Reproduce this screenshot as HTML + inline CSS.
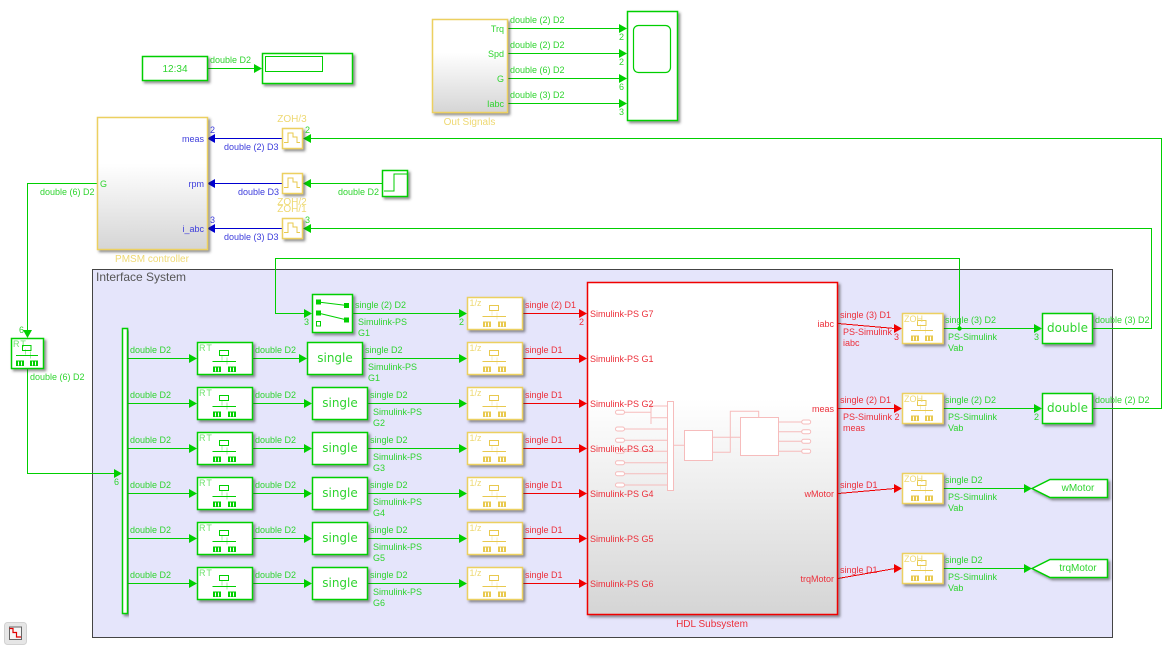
<!DOCTYPE html>
<html><head><meta charset="utf-8"><title>Simulink model</title>
<style>
html,body{margin:0;padding:0;background:#fff;width:1171px;height:648px;overflow:hidden}
svg{display:block}
text{font-family:"Liberation Sans",sans-serif;font-size:9px}
.g text,text.g{fill:#2fd42f}
.r text,text.r{fill:#ec2f3a}
.b text,text.b{fill:#3c3cdc}
.y text,text.y{fill:#eed973;font-size:10px}
.m{text-anchor:middle}.e{text-anchor:end}
.big{font-family:"DejaVu Sans",sans-serif;font-size:12px;text-anchor:middle;fill:#2fd42f}
.rt{font-size:9px;letter-spacing:1px;fill-opacity:.7}
.l{fill:none;stroke-width:1}
.gl{stroke:#00cf00}.rl{stroke:#f00000}.bl{stroke:#0000d0}
.bg{fill:#fff;stroke:#00cf00;stroke-width:1.500;filter:url(#s)}
.by{fill:#fff;stroke:#ecd060;stroke-width:1.500;filter:url(#s)}
.gh{fill:none;stroke:#f6bcbc;stroke-width:1}
.ghf{fill:#fff;stroke:#f6bcbc;stroke-width:1}
</style></head><body>
<svg xmlns="http://www.w3.org/2000/svg" width="1171" height="648" viewBox="0 0 1171 648">
<defs>
<filter id="s" x="-20%" y="-20%" width="150%" height="150%"><feDropShadow dx="2" dy="2" stdDeviation="1.3" flood-color="#333" flood-opacity=".55"/></filter>
<linearGradient id="gr" x1="0" y1="0" x2="0" y2="1"><stop offset=".35" stop-color="#fff"/><stop offset="1" stop-color="#d5d5d5"/></linearGradient>
<polygon id="a" points="0,-4.500 8,0 0,4.500"/>
<polygon id="al" points="8,-4.500 0,0 8,4.500"/>
<g id="ic">
<rect x="11" y="7" width="8.500" height="5" fill="none" stroke="currentColor"/>
<path d="M4.500 17H26.500" stroke="currentColor" fill="none"/>
<path d="M14 11V16M19 13V20" stroke="currentColor" stroke-opacity=".35" fill="none"/>
<rect x="4.500" y="22" width="8" height="5.500" fill="currentColor"/>
<rect x="18.500" y="22" width="8" height="5.500" fill="currentColor"/>
<path d="M7 23V27M10 23V27M21 23V27M24 23V27" stroke="#fff" fill="none"/>
</g>
<g id="ic2">
<rect x="22" y="8" width="9" height="5" fill="none" stroke="currentColor"/>
<path d="M15 19H38.500" stroke="currentColor" fill="none"/>
<path d="M24.500 13V18M29.500 15V22" stroke="currentColor" stroke-opacity=".35" fill="none"/>
<rect x="15.500" y="24" width="8" height="5.500" fill="currentColor"/>
<rect x="30.500" y="24" width="8" height="5.500" fill="currentColor"/>
<path d="M18 25V29M21 25V29M33 25V29M36 25V29" stroke="#fff" fill="none"/>
</g>
<path id="st" d="M1.500 14H5.500V4.500H10.500V8.500H14.500V14H17.500" fill="none" stroke="#e8c94e"/>
</defs>

<!-- Interface System -->
<rect x="92.500" y="269.500" width="1020" height="368" fill="#e5e5fb" stroke="#444" stroke-width="1"/>
<text x="96" y="281" style="font-size:12px" fill="#555">Interface System</text>

<!-- Green wires -->
<g class="l gl">
<path d="M208 68.500H255"/>
<path d="M508 28.500H620M508 53.500H620M508 78.500H620M508 103.500H620"/>
<path d="M311 138.500H1161.500V408.500H1093"/>
<path d="M311 183.500H382"/>
<path d="M311 228.500H1151.500V328.500H1093"/>
<path d="M97 183.500H27.500V331"/>
<path d="M27.500 369V473.500H115"/>
<path d="M128 358.500H190M128 403.500H190M128 448.500H190M128 493.500H190M128 538.500H190M128 583.500H190"/>
<path d="M253 358.500H300M253 403.500H305M253 448.500H305M253 493.500H305M253 538.500H305M253 583.500H305"/>
<path d="M353 313.500H460M363 358.500H460M368 403.500H460M368 448.500H460M368 493.500H460M368 538.500H460M368 583.500H460"/>
<path d="M305 313.500H275.500V258.500H959.500V328.500"/>
<path d="M943 328.500H1035M943 408.500H1035M943 488.500H1025M943 568.500H1025"/>
</g>
<circle cx="959.500" cy="328.500" r="2.200" fill="#00cf00"/>

<!-- Blue wires -->
<g class="l bl"><path d="M214 138.500H283M214 183.500H283M214 228.500H283"/></g>
<g fill="#0000d0">
<use href="#al" x="207" y="138.500"/><use href="#al" x="207" y="183.500"/><use href="#al" x="207" y="228.500"/>
</g>

<!-- Red wires -->
<g class="l rl">
<path d="M523 313.500H580M523 358.500H580M523 403.500H580M523 448.500H580M523 493.500H580M523 538.500H580M523 583.500H580"/>
<path d="M838 408.500H895"/>
<path d="M838 323.500L895 328.500" shape-rendering="crispEdges"/>
<path d="M838 493.500L895 488.500" shape-rendering="crispEdges"/>
<path d="M838 578.500L895 568.500" shape-rendering="crispEdges"/>
</g>
<g fill="#f00000">
<use href="#a" x="579" y="313.500"/><use href="#a" x="579" y="358.500"/><use href="#a" x="579" y="403.500"/><use href="#a" x="579" y="448.500"/><use href="#a" x="579" y="493.500"/><use href="#a" x="579" y="538.500"/><use href="#a" x="579" y="583.500"/>
<use href="#a" x="894" y="328.500"/><use href="#a" x="894" y="408.500"/><use href="#a" x="894" y="488.500"/><use href="#a" x="894" y="568.500"/>
</g>

<!-- Green arrows -->
<g fill="#00cf00">
<use href="#a" x="254" y="68.500"/>
<use href="#a" x="619" y="28.500"/><use href="#a" x="619" y="53.500"/><use href="#a" x="619" y="78.500"/><use href="#a" x="619" y="103.500"/>
<use href="#al" x="303" y="138.500"/><use href="#al" x="303" y="183.500"/><use href="#al" x="303" y="228.500"/>
<polygon points="23,330 32,330 27.500,338"/>
<use href="#a" x="114" y="473.500"/>
<use href="#a" x="189" y="358.500"/><use href="#a" x="189" y="403.500"/><use href="#a" x="189" y="448.500"/><use href="#a" x="189" y="493.500"/><use href="#a" x="189" y="538.500"/><use href="#a" x="189" y="583.500"/>
<use href="#a" x="299" y="358.500"/><use href="#a" x="304" y="403.500"/><use href="#a" x="304" y="448.500"/><use href="#a" x="304" y="493.500"/><use href="#a" x="304" y="538.500"/><use href="#a" x="304" y="583.500"/>
<use href="#a" x="304" y="313.500"/>
<use href="#a" x="459" y="313.500"/><use href="#a" x="459" y="358.500"/><use href="#a" x="459" y="403.500"/><use href="#a" x="459" y="448.500"/><use href="#a" x="459" y="493.500"/><use href="#a" x="459" y="538.500"/><use href="#a" x="459" y="583.500"/>
<use href="#a" x="1034" y="328.500"/><use href="#a" x="1034" y="408.500"/><use href="#a" x="1024" y="488.500"/><use href="#a" x="1024" y="568.500"/>
</g>

<!-- Top: clock + display -->
<rect class="bg" x="142.500" y="56.500" width="65" height="24"/>
<text x="175" y="72" class="m g" style="font-size:10px">12:34</text>
<rect class="bg" x="262.500" y="53.500" width="90" height="30"/>
<rect x="265.500" y="56.500" width="57" height="15" fill="#fff" stroke="#00cf00"/>

<!-- Out Signals + scope -->
<rect x="432.500" y="19.500" width="75" height="93" fill="url(#gr)" stroke="#ecd060" stroke-width="1.500" filter="url(#s)"/>
<g class="g">
<text x="504" y="32" class="e">Trq</text><text x="504" y="57" class="e">Spd</text><text x="504" y="82" class="e">G</text><text x="504" y="107" class="e">Iabc</text>
<text x="510" y="23">double (2) D2</text><text x="510" y="48">double (2) D2</text><text x="510" y="73">double (6) D2</text><text x="510" y="98">double (3) D2</text>
<text x="619" y="40">2</text><text x="619" y="65">2</text><text x="619" y="90">6</text><text x="619" y="115">3</text>
<text x="210" y="63">double D2</text>
</g>
<text x="469.500" y="125" class="y m">Out Signals</text>
<rect class="bg" x="627.500" y="11.500" width="50" height="109"/>
<rect x="633.500" y="25.500" width="37" height="47" rx="5" fill="#fff" stroke="#00cf00" stroke-width="1.200"/>

<!-- PMSM controller -->
<rect x="97.500" y="117.500" width="110" height="132" fill="url(#gr)" stroke="#ecd060" stroke-width="1.500" filter="url(#s)"/>
<g class="b">
<text x="204" y="142" class="e">meas</text><text x="204" y="187" class="e">rpm</text><text x="204" y="232" class="e">i_abc</text>
<text x="210" y="133">2</text><text x="210" y="223">3</text>
<text x="224" y="150">double (2) D3</text><text x="238" y="195">double D3</text><text x="224" y="240">double (3) D3</text>
</g>
<text x="100" y="187" class="g">G</text>
<text x="152" y="262" class="y m">PMSM controller</text>

<!-- ZOH small -->
<rect class="by" x="282.500" y="128.500" width="20" height="20"/><use href="#st" x="282.500" y="128.500"/>
<rect class="by" x="282.500" y="173.500" width="20" height="20"/><use href="#st" x="282.500" y="173.500"/>
<rect class="by" x="282.500" y="218.500" width="20" height="20"/><use href="#st" x="282.500" y="218.500"/>
<text x="292" y="122" class="y m">ZOH/3</text><text x="292" y="205" class="y m">ZOH/2</text><text x="292" y="212" class="y m">ZOH/1</text>
<g class="g">
<text x="305" y="133">2</text><text x="305" y="223">3</text>
<text x="338" y="195">double D2</text>
<text x="40" y="195">double (6) D2</text>
<text x="19" y="333">6</text>
<text x="30" y="380">double (6) D2</text>
<text x="114" y="485">6</text>
</g>

<!-- Step -->
<rect class="bg" x="382.500" y="170.500" width="25" height="26"/>
<path d="M384 191H394V174H407" fill="none" stroke="#00cf00"/>

<!-- Left RT -->
<rect class="bg" x="11.500" y="338.500" width="32" height="30"/>
<text x="13" y="347" class="g rt">RT</text>
<use href="#ic" x="11.500" y="338.500" color="#00cf00"/>

<!-- Bus -->
<rect class="bg" x="122.500" y="328.500" width="5" height="285"/>

<!-- RT blocks -->
<g color="#00cf00">
<rect class="bg" x="197.500" y="342.500" width="55" height="32"/><use href="#ic2" x="197.500" y="342.500"/>
<rect class="bg" x="197.500" y="387.500" width="55" height="32"/><use href="#ic2" x="197.500" y="387.500"/>
<rect class="bg" x="197.500" y="432.500" width="55" height="32"/><use href="#ic2" x="197.500" y="432.500"/>
<rect class="bg" x="197.500" y="477.500" width="55" height="32"/><use href="#ic2" x="197.500" y="477.500"/>
<rect class="bg" x="197.500" y="522.500" width="55" height="32"/><use href="#ic2" x="197.500" y="522.500"/>
<rect class="bg" x="197.500" y="567.500" width="55" height="32"/><use href="#ic2" x="197.500" y="567.500"/>
</g>
<g class="g">
<text x="199" y="351" class="rt">RT</text><text x="199" y="396" class="rt">RT</text><text x="199" y="441" class="rt">RT</text><text x="199" y="486" class="rt">RT</text><text x="199" y="531" class="rt">RT</text><text x="199" y="576" class="rt">RT</text>
<text x="130" y="353">double D2</text><text x="130" y="398">double D2</text><text x="130" y="443">double D2</text><text x="130" y="488">double D2</text><text x="130" y="533">double D2</text><text x="130" y="578">double D2</text>
<text x="255" y="353">double D2</text><text x="255" y="398">double D2</text><text x="255" y="443">double D2</text><text x="255" y="488">double D2</text><text x="255" y="533">double D2</text><text x="255" y="578">double D2</text>
</g>

<!-- Switch -->
<rect class="bg" x="312.500" y="294.500" width="40" height="38"/>
<path d="M318 302L347 305.500M318 313L347 320" stroke="#00cf00" fill="none"/>
<g fill="#00cf00">
<rect x="316" y="299.500" width="5" height="5"/><rect x="316" y="310.500" width="5" height="5"/>
<rect x="344" y="303" width="5" height="5"/><rect x="344" y="317.500" width="5" height="5"/>
</g>
<rect x="316.500" y="321.500" width="4" height="4.500" fill="none" stroke="#00cf00"/>

<!-- single blocks -->
<rect class="bg" x="307.500" y="342.500" width="55" height="32"/><text x="335" y="362" class="big">single</text>
<rect class="bg" x="312.500" y="387.500" width="55" height="32"/><text x="340" y="407" class="big">single</text>
<rect class="bg" x="312.500" y="432.500" width="55" height="32"/><text x="340" y="452" class="big">single</text>
<rect class="bg" x="312.500" y="477.500" width="55" height="32"/><text x="340" y="497" class="big">single</text>
<rect class="bg" x="312.500" y="522.500" width="55" height="32"/><text x="340" y="542" class="big">single</text>
<rect class="bg" x="312.500" y="567.500" width="55" height="32"/><text x="340" y="587" class="big">single</text>
<g class="g">
<text x="304" y="325">3</text>
<text x="355" y="308">single (2) D2</text><text x="358" y="325">Simulink-PS</text><text x="358" y="336">G1</text>
<text x="365" y="353">single D2</text><text x="368" y="370">Simulink-PS</text><text x="368" y="381">G1</text>
<text x="370" y="398">single D2</text><text x="373" y="415">Simulink-PS</text><text x="373" y="426">G2</text>
<text x="370" y="443">single D2</text><text x="373" y="460">Simulink-PS</text><text x="373" y="471">G3</text>
<text x="370" y="488">single D2</text><text x="373" y="505">Simulink-PS</text><text x="373" y="516">G4</text>
<text x="370" y="533">single D2</text><text x="373" y="550">Simulink-PS</text><text x="373" y="561">G5</text>
<text x="370" y="578">single D2</text><text x="373" y="595">Simulink-PS</text><text x="373" y="606">G6</text>
<text x="459" y="325">2</text>
</g>

<!-- 1/z blocks -->
<g color="#e8c94e">
<rect class="by" x="467.500" y="297.500" width="55" height="32"/><use href="#ic2" x="467.500" y="297.500"/>
<rect class="by" x="467.500" y="342.500" width="55" height="32"/><use href="#ic2" x="467.500" y="342.500"/>
<rect class="by" x="467.500" y="387.500" width="55" height="32"/><use href="#ic2" x="467.500" y="387.500"/>
<rect class="by" x="467.500" y="432.500" width="55" height="32"/><use href="#ic2" x="467.500" y="432.500"/>
<rect class="by" x="467.500" y="477.500" width="55" height="32"/><use href="#ic2" x="467.500" y="477.500"/>
<rect class="by" x="467.500" y="522.500" width="55" height="32"/><use href="#ic2" x="467.500" y="522.500"/>
<rect class="by" x="467.500" y="567.500" width="55" height="32"/><use href="#ic2" x="467.500" y="567.500"/>
</g>
<g class="y">
<text x="469.500" y="306" style="font-size:9px">1/z</text><text x="469.500" y="351" style="font-size:9px">1/z</text><text x="469.500" y="396" style="font-size:9px">1/z</text><text x="469.500" y="441" style="font-size:9px">1/z</text><text x="469.500" y="486" style="font-size:9px">1/z</text><text x="469.500" y="531" style="font-size:9px">1/z</text><text x="469.500" y="576" style="font-size:9px">1/z</text>
</g>
<g class="r">
<text x="525" y="308">single (2) D1</text><text x="525" y="353">single D1</text><text x="525" y="398">single D1</text><text x="525" y="443">single D1</text><text x="525" y="488">single D1</text><text x="525" y="533">single D1</text><text x="525" y="578">single D1</text>
<text x="579" y="325">2</text>
</g>

<!-- HDL Subsystem -->
<rect x="587.500" y="282.500" width="250" height="332" fill="url(#gr)" stroke="#f00000" stroke-width="1.500" filter="url(#s)"/>
<g class="gh">
<path d="M624 412.300H651M651 405V424M651 406H667M651 417.700H667"/>
<path d="M624 429H667M624 440.300H667M624 451.300H667M624 462.700H667M624 473.700H667M624 485H667"/>
<path d="M673 445.300H684M712.700 437.300H740.300M712.700 452.300H730.300V411.300H758.700V417"/>
<path d="M778 422H802M778 431.700H802M778 441.300H802M778 451.300H802"/>
</g>
<g class="ghf">
<rect x="615.500" y="410.300" width="9" height="4" rx="2"/><rect x="615.500" y="427" width="9" height="4" rx="2"/><rect x="615.500" y="438.300" width="9" height="4" rx="2"/><rect x="615.500" y="449.300" width="9" height="4" rx="2"/><rect x="615.500" y="460.700" width="9" height="4" rx="2"/><rect x="615.500" y="471.700" width="9" height="4" rx="2"/><rect x="615.500" y="483" width="9" height="4" rx="2"/>
<rect x="667.500" y="401.500" width="6" height="89"/>
<rect x="684.500" y="430.500" width="28" height="30"/>
<rect x="740.500" y="417.500" width="38" height="38"/>
<rect x="801.700" y="420" width="9" height="4" rx="2"/><rect x="801.700" y="429.700" width="9" height="4" rx="2"/><rect x="801.700" y="439.300" width="9" height="4" rx="2"/><rect x="801.700" y="449.300" width="9" height="4" rx="2"/>
</g>
<g class="r">
<text x="590" y="317">Simulink-PS G7</text><text x="590" y="362">Simulink-PS G1</text><text x="590" y="407">Simulink-PS G2</text><text x="590" y="452">Simulink-PS G3</text><text x="590" y="497">Simulink-PS G4</text><text x="590" y="542">Simulink-PS G5</text><text x="590" y="587">Simulink-PS G6</text>
<text x="834" y="327" class="e">iabc</text><text x="834" y="412" class="e">meas</text><text x="834" y="497" class="e">wMotor</text><text x="834" y="582" class="e">trqMotor</text>
<text x="712" y="627" class="m" style="font-size:10px">HDL Subsystem</text>
<text x="840" y="318">single (3) D1</text><text x="843" y="335">PS-Simulink</text><text x="843" y="346">iabc</text><text x="894" y="340">3</text>
<text x="840" y="403">single (2) D1</text><text x="843" y="420">PS-Simulink 2</text><text x="843" y="431">meas</text>
<text x="840" y="488">single D1</text>
<text x="840" y="573">single D1</text>
</g>

<!-- ZOH right -->
<g color="#e8c94e">
<rect class="by" x="902.500" y="313.500" width="40.500" height="30"/><use href="#ic" x="906.500" y="313.500"/>
<rect class="by" x="902.500" y="393.500" width="40.500" height="30"/><use href="#ic" x="906.500" y="393.500"/>
<rect class="by" x="902.500" y="473.500" width="40.500" height="30"/><use href="#ic" x="906.500" y="473.500"/>
<rect class="by" x="902.500" y="553.500" width="40.500" height="30"/><use href="#ic" x="906.500" y="553.500"/>
</g>
<g class="y">
<text x="904" y="322" style="font-size:9px">ZOH</text><text x="904" y="402" style="font-size:9px">ZOH</text><text x="904" y="482" style="font-size:9px">ZOH</text><text x="904" y="562" style="font-size:9px">ZOH</text>
</g>
<g class="g">
<text x="945" y="323">single (3) D2</text><text x="948" y="340">PS-Simulink</text><text x="948" y="351">Vab</text>
<text x="945" y="403">single (2) D2</text><text x="948" y="420">PS-Simulink</text><text x="948" y="431">Vab</text>
<text x="945" y="483">single D2</text><text x="948" y="500">PS-Simulink</text><text x="948" y="511">Vab</text>
<text x="945" y="563">single D2</text><text x="948" y="580">PS-Simulink</text><text x="948" y="591">Vab</text>
<text x="1034" y="340">3</text><text x="1034" y="420">2</text>
<text x="1095" y="323">double (3) D2</text><text x="1095" y="403">double (2) D2</text>
</g>

<!-- double -->
<rect class="bg" x="1042.500" y="313.500" width="50" height="30"/><text x="1067.500" y="332" class="big">double</text>
<rect class="bg" x="1042.500" y="393.500" width="50" height="30"/><text x="1067.500" y="412" class="big">double</text>

<!-- Goto -->
<polygon class="bg" points="1032,488.500 1050,479.500 1107.500,479.500 1107.500,497.500 1050,497.500"/>
<text x="1078" y="491" class="g m" style="font-size:10px">wMotor</text>
<polygon class="bg" points="1032,568.500 1050,559.500 1107.500,559.500 1107.500,577.500 1050,577.500"/>
<text x="1078" y="571" class="g m" style="font-size:10px">trqMotor</text>

<!-- Reset icon -->
<rect x="4.500" y="622.500" width="22" height="22" rx="3" fill="#e6e6e6" stroke="#d2d2d2"/>
<rect x="9.500" y="627" width="12" height="12.500" fill="#f6f6f6" stroke="#666"/>
<path d="M9.500 628.500H13V632.500H16.500V637H21" fill="none" stroke="#e00000" stroke-width="1.200"/>
</svg>
</body></html>
